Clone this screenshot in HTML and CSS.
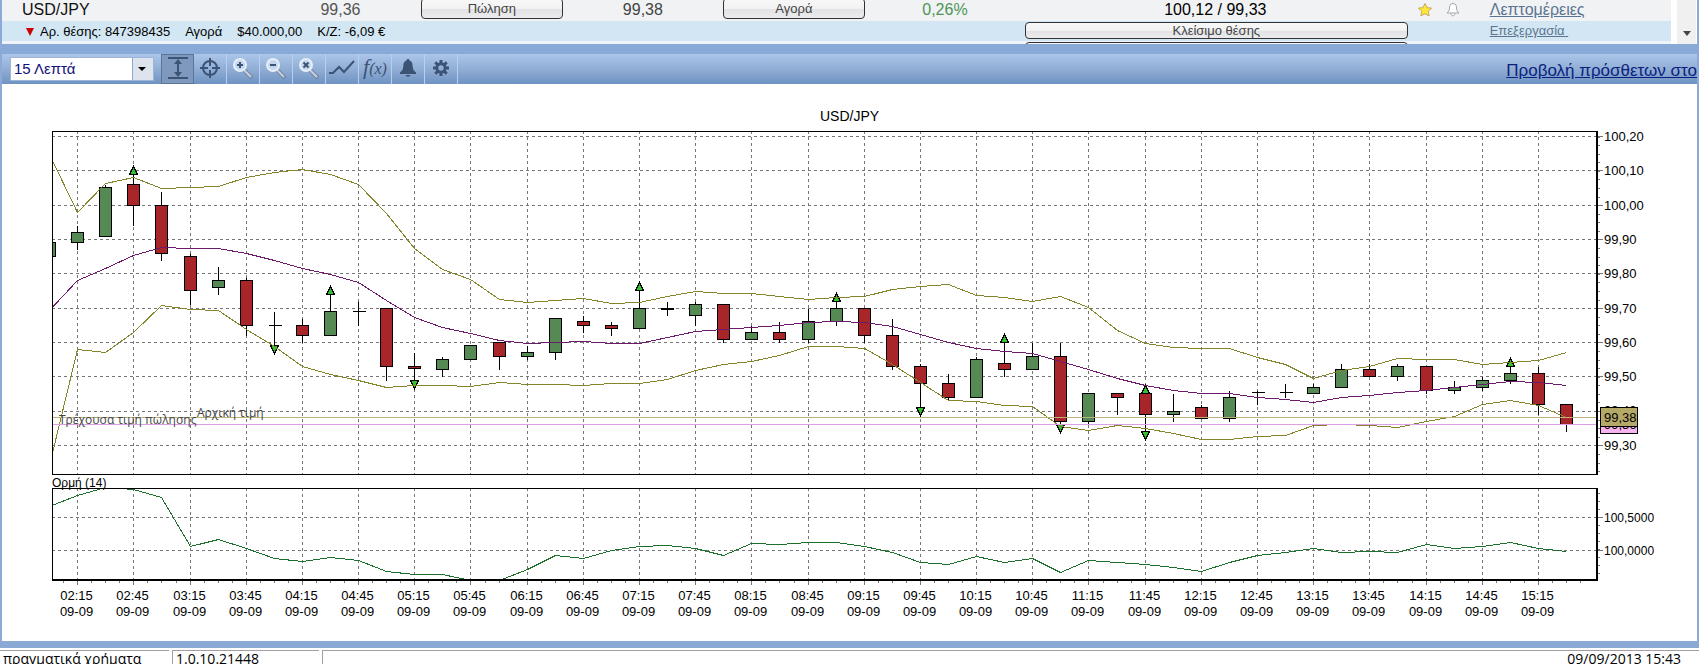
FILE: index.html
```html
<!DOCTYPE html>
<html lang="el">
<head>
    <meta charset="UTF-8">
    <meta name="viewport" content="width=device-width, initial-scale=1.0">
    <link rel="icon" href="data:,">
    <title>USD/JPY</title>
    <link rel="stylesheet" href="styles.css">
</head>
<body>
<div class="window">
    <!-- Instruments and open positions -->
    <div class="quotes">
        <table class="quotes-table">
            <colgroup>
                <col class="col-name">
                <col class="col-price">
                <col class="col-button">
                <col class="col-price2">
                <col class="col-button">
                <col class="col-price2">
                <col class="col-range">
                <col class="col-icons">
                <col class="col-link">
            </colgroup>
            <tr class="row-pair">
                <td class="name">USD/JPY</td>
                <td class="sell">99,36</td>
                <td><button type="button" class="trade-btn">Πώληση</button></td>
                <td class="center">99,38</td>
                <td><button type="button" class="trade-btn">Αγορά</button></td>
                <td class="center change">0,26%</td>
                <td class="center range">100,12 / 99,33</td>
                <td class="icons">
                    <svg width="16" height="16" viewBox="0 0 16 16"><path d="M8 1.5l2 4.1 4.6.6-3.4 3.1.9 4.6L8 11.8l-4.1 2.1.9-4.6L1.4 6.2 6 5.6z" fill="#ffe63c" stroke="#c9a758" stroke-width="1"/></svg>
                    <svg width="16" height="16" viewBox="0 0 16 16"><path d="M8 1.5c-3 0-3.500 2.500-3.500 4.500 0 2.500-1 3.500-2.500 5h12c-1.500-1.500-2.500-2.500-2.500-5 0-2-.5-4.500-3.500-4.500zM6 11.500c0 3 4 3 4 0" fill="#fff" stroke="#a5a5a8" stroke-width="1"/></svg>
                </td>
                <td class="links"><a href="#" class="details">Λεπτομέρειες</a></td>
            </tr>
            <tr class="row-position">
                <td colspan="6">
                    <div class="position">
                        <span class="down"></span>
                        <span class="pos-number">Αρ. θέσης: 847398435</span>
                        <span>Αγορά</span>
                        <span>$40.000,00</span>
                        <span>Κ/Ζ: -6,09 €</span>
                    </div>
                </td>
                <td class="close-cell"><button type="button" class="trade-btn close-btn">Κλείσιμο θέσης</button></td>
                <td></td>
                <td class="links"><a href="#" class="edit">Επεξεργασία&nbsp;</a></td>
            </tr>
            <tr class="row-next">
                <td colspan="6"></td>
                <td class="close-cell"><button type="button" class="trade-btn close-btn" aria-label="Κλείσιμο"></button></td>
                <td></td>
                <td></td>
            </tr>
        </table>
        <div class="scrollbar"><span class="scroll-arrow"></span></div>
    </div>

    <!-- Chart toolbar -->
    <div class="toolbar">
        <div class="period">
            <select aria-label="Περίοδος">
                <option>15 Λεπτά</option>
            </select>
        </div>
        <div class="tools">
            <button type="button" class="tool pressed" aria-label="Κλίμακα">
                <svg width="22" height="24" viewBox="0 0 22 24"><path d="M1 2h20M1 22h20M11 6v12" stroke="#3c5374" stroke-width="2"/><path d="M11 3l4 5H7zM11 21l4-5H7z" fill="#3c5374"/></svg>
            </button>
            <button type="button" class="tool" aria-label="Σταυρόνημα">
                <svg width="22" height="22" viewBox="0 0 22 22" fill="none" stroke="#3c5374"><circle cx="11" cy="11" r="7" stroke-width="2"/><path d="M11 1v8M11 13v8M1 11h8M13 11h8" stroke-width="2"/></svg>
            </button>
            <button type="button" class="tool" aria-label="Μεγέθυνση">
                <svg width="24" height="24" viewBox="0 0 24 24"><path d="M13 14l8 8" stroke="#7588a6" stroke-width="4"/><path d="M13 14l7 7" stroke="#c5d0e0" stroke-width="2"/><circle cx="9" cy="9" r="6" fill="#c3d8ee" stroke="#e6eff8" stroke-width="2"/><path d="M6 9h6M9 6v6" stroke="#3c5374" stroke-width="2"/></svg>
            </button>
            <button type="button" class="tool" aria-label="Σμίκρυνση">
                <svg width="24" height="24" viewBox="0 0 24 24"><path d="M13 14l8 8" stroke="#7588a6" stroke-width="4"/><path d="M13 14l7 7" stroke="#c5d0e0" stroke-width="2"/><circle cx="9" cy="9" r="6" fill="#c3d8ee" stroke="#e6eff8" stroke-width="2"/><path d="M6 9h6" stroke="#3c5374" stroke-width="2"/></svg>
            </button>
            <button type="button" class="tool" aria-label="Επαναφορά">
                <svg width="24" height="24" viewBox="0 0 24 24"><path d="M13 14l8 8" stroke="#7588a6" stroke-width="4"/><path d="M13 14l7 7" stroke="#c5d0e0" stroke-width="2"/><circle cx="9" cy="9" r="6" fill="#c3d8ee" stroke="#e6eff8" stroke-width="2"/><path d="M6.500 6.500l5 5M11.500 6.500l-5 5" stroke="#3c5374" stroke-width="2"/></svg>
            </button>
            <button type="button" class="tool" aria-label="Γραμμή">
                <svg width="28" height="22" viewBox="0 0 28 22"><path d="M1 16h4l6-6 5 5 10-11" fill="none" stroke="#3c5374" stroke-width="2"/></svg>
            </button>
            <button type="button" class="tool fx" aria-label="Δείκτες"><span class="fx-f">f</span><span class="fx-x">(x)</span></button>
            <button type="button" class="tool" aria-label="Ειδοποίηση">
                <svg width="18" height="20" viewBox="0 0 18 20" fill="#3c5374"><path d="M9 1c-1 0-1.500.6-1.500 1.500C4.500 3.500 4.500 6 4.200 9c-.2 2.500-1.200 4-3.200 5.500V16h16v-1.500c-2-1.500-3-3-3.200-5.500-.3-3-.3-5.500-3.300-6.500C10.500 1.600 10 1 9 1z"/><path d="M6.500 17h5c-.6 2.300-4.400 2.300-5 0z"/></svg>
            </button>
            <button type="button" class="tool" aria-label="Ρυθμίσεις">
                <svg width="18" height="18" viewBox="0 0 18 18" fill="none" stroke="#3c5374"><circle cx="9" cy="9" r="4.200" stroke-width="3"/><path d="M9 1v3M9 14v3M1 9h3M14 9h3M3.300 3.300l2.200 2.200M12.500 12.500l2.200 2.200M14.700 3.300l-2.200 2.200M5.500 12.500l-2.200 2.200" stroke-width="3"/></svg>
            </button>
        </div>
        <a href="#" class="more">Προβολή πρόσθετων στο</a>
    </div>

    <div class="chart" id="chart"></div>
</div>

<div class="statusbar">
    <div class="cell account">πραγματικά χρήματα</div>
    <div class="cell version">1.0.10.21448</div>
    <div class="cell clock">09/09/2013 15:43</div>
</div>
<script src="chart.js"></script>
</body>
</html>
```
FILE: styles.css
```css
body {
    margin: 0;
    background-color: #fff;
    font-family: "Liberation Sans", Arial, sans-serif;
    font-size: 13px;
    color: #000;
    overflow: hidden;
}

.window {
    border-left: 2px solid #8da9d9;
    border-right: 2px solid #8da9d9;
    border-bottom: 7px solid #8aa9d5;
}

/* Quotes list, scrolled a little so its last row is cut */
.quotes {
    display: flex;
    height: 44px;
    overflow: hidden;
    align-items: flex-end;
    border-bottom: 10px solid #89a9d6;
}
.quotes-table {
    flex: 1;
    table-layout: fixed;
    border-collapse: collapse;
    align-self: flex-start;
    margin-top: -2px;
}
.quotes-table td {
    padding: 0;
    vertical-align: top;
    white-space: nowrap;
}
.col-name { width: 18.9%; }
.col-price { width: 6%; }
.col-button { width: 8.9%; }
.col-price2 { width: 9.2%; }
.col-range { width: 23.2%; }
.col-icons { width: 4.6%; }
.col-link { width: 11.1%; }

.row-pair {
    height: 23px;
    background-color: #f1f2f4;
    font-size: 16px;
    line-height: 23px;
    color: #444;
}
.row-pair .name {
    padding-left: 20px;
    color: #111;
}
.row-pair .sell {
    padding-left: 3px;
    color: #555;
}
.row-pair .center { text-align: center; }
.row-pair .change { color: #4d9554; }
.row-pair .range { color: #000; }
.row-pair .icons {
    padding-left: 8px;
    line-height: 0;
}
.icons svg {
    margin: 4px 8px 0 0;
}

.row-position {
    height: 20px;
    background-color: #d2e7f3;
}
.row-next {
    height: 20px;
    background-color: #f0f4f8;
}
.position {
    display: flex;
    align-items: center;
    gap: 15px;
    padding: 1px 0 0 24px;
    line-height: 19px;
}
.down {
    border-left: 4px solid transparent;
    border-right: 4px solid transparent;
    border-top: 8px solid #c00;
}
.pos-number { margin-left: -9px; }

.trade-btn {
    display: block;
    box-sizing: border-box;
    width: 142px;
    max-width: 100%;
    height: 21px;
    margin: 0 auto;
    padding: 0;
    border: 1px solid #333;
    border-radius: 4px;
    background: linear-gradient(#f8f8f9, #f2f2f3 50%, #e2e2e4 52%, #ececee);
    font-family: inherit;
    font-size: 13px;
    line-height: 19px;
    color: #444;
    cursor: pointer;
}
.close-btn {
    width: 100%;
    height: 17px;
    line-height: 14px;
}
.quotes-table .close-cell { padding: 1px 1px 0 3px; }
.quotes-table .links { padding-left: 4px; }

.details,
.edit { color: #5b7590; }
.edit { line-height: 20px; }

.scrollbar {
    width: 19px;
    height: 44px;
    margin-left: 6px;
    border-right: 1px solid #fff;
    background-color: #f0f0f0;
    display: flex;
    align-items: flex-end;
    justify-content: center;
}
.scroll-arrow {
    margin-bottom: 8px;
    border-left: 4px solid transparent;
    border-right: 4px solid transparent;
    border-top: 5px solid #444;
}

/* Toolbar */
.toolbar {
    display: flex;
    align-items: center;
    height: 30px;
    background: linear-gradient(#abc6e9, #8eabd3 55%, #6e93c2);
}
.period {
    position: relative;
    flex: none;
    width: 144px;
    height: 24px;
    margin-left: 8px;
}
.period select {
    appearance: none;
    width: 100%;
    height: 100%;
    padding: 0 24px 2px 3px;
    border: 1px solid #9db6d8;
    border-radius: 0;
    background: linear-gradient(to right, #fff 121px, #8da9d0 121px, #8da9d0 122px, #dde4ee 122px);
    font-family: inherit;
    font-size: 15px;
    color: #10107a;
}
.period::after {
    content: "";
    position: absolute;
    right: 8px;
    top: 10px;
    border-left: 4px solid transparent;
    border-right: 4px solid transparent;
    border-top: 4px solid #000;
    pointer-events: none;
}
.tools {
    display: flex;
    align-self: stretch;
    margin-left: 7px;
}
.tool {
    display: flex;
    align-items: center;
    justify-content: center;
    box-sizing: border-box;
    width: 33px;
    padding: 0 0 2px;
    border: 0;
    border-right: 1px solid #b7d0ef;
    background: none;
    cursor: pointer;
}
.tool.pressed {
    border: 1px solid #5d7499;
    background-color: #7f98bd;
}
.fx {
    align-items: baseline;
    font-family: "Liberation Serif", serif;
    font-style: italic;
    color: #3c5374;
}
.fx-f {
    font-size: 22px;
    line-height: 26px;
}
.fx-x { font-size: 16px; }
.more {
    flex: none;
    margin-left: auto;
    white-space: nowrap;
    font-size: 17px;
    line-height: 20px;
    padding-top: 3px;
    color: #0a1f80;
}

/* Chart */
.chart svg {
    display: block;
    shape-rendering: crispEdges;
}
.chart text { font-size: 13px; }
.chart .title { font-size: 14px; }
.chart .study { font-size: 12px; }
.chart .note {
    font-family: "Open Sans", sans-serif;
    font-size: 12px;
    fill: #444;
}
.frame {
    fill: none;
    stroke: #000;
}
.axis {
    stroke: #000;
    stroke-width: 2;
}
.grid {
    stroke: #777;
    stroke-dasharray: 3 3;
}
.tick { stroke: #777; }
.wick { stroke: #000; }
.up, .down-body { stroke: #000; }
.up { fill: #568a54; }
.down-body { fill: #a8262a; }
.arrow {
    fill: #2fc42f;
    stroke: #000;
}
.band, .middle, .momentum { fill: none; }
.band { stroke: #84842a; }
.middle { stroke: #6c1a6c; }
.momentum { stroke: #1d6f2b; }
.line-open { stroke: #bdb07a; }
.line-sell { stroke: #dda0e6; }
.tag-open { fill: #b5a968; stroke: #000; }
.tag-sell { fill: #f8b4f0; stroke: #000; }

/* Status bar */
.statusbar {
    display: flex;
    gap: 3px;
    margin-top: 2px;
    font-family: "Open Sans", sans-serif;
    font-size: 14px;
    line-height: 16px;
}
.cell {
    box-sizing: border-box;
    border-top: 1px solid #a59fa5;
    padding-left: 3px;
    white-space: nowrap;
}
.account { width: 169px; }
.version {
    width: 147px;
    border-left: 1px solid #a59fa5;
}
.clock {
    flex: 1;
    border-left: 1px solid #a59fa5;
    padding-right: 18px;
    text-align: right;
}
```
FILE: chart.js
```js
// open, close, high, low, signal (u - arrow above, d - arrow below, b - both)
const candles = [
    [99.85, 99.89, 99.89, 99.85], [99.89, 99.92, 99.94, 99.87], [99.91, 100.05, 100.06, 99.91],
    [100.06, 100.00, 100.09, 99.94, 'u'], [100.00, 99.86, 100.04, 99.84], [99.85, 99.75, 99.86, 99.71],
    [99.76, 99.78, 99.82, 99.74], [99.78, 99.65, 99.79, 99.62], [99.65, 99.65, 99.69, 99.59, 'd'],
    [99.65, 99.62, 99.67, 99.60], [99.62, 99.69, 99.74, 99.62, 'u'], [99.69, 99.69, 99.72, 99.65],
    [99.70, 99.53, 99.70, 99.49], [99.53, 99.525, 99.57, 99.49, 'd'], [99.52, 99.55, 99.56, 99.50],
    [99.55, 99.59, 99.59, 99.55], [99.60, 99.56, 99.60, 99.52], [99.56, 99.57, 99.59, 99.55],
    [99.57, 99.67, 99.67, 99.55], [99.66, 99.65, 99.68, 99.63], [99.65, 99.64, 99.66, 99.62],
    [99.64, 99.70, 99.75, 99.64, 'u'], [99.70, 99.695, 99.72, 99.68], [99.68, 99.71, 99.72, 99.65],
    [99.71, 99.61, 99.71, 99.60], [99.61, 99.63, 99.65, 99.61], [99.63, 99.61, 99.66, 99.60],
    [99.61, 99.66, 99.70, 99.60], [99.66, 99.70, 99.72, 99.65, 'u'], [99.70, 99.62, 99.70, 99.60],
    [99.62, 99.53, 99.67, 99.52], [99.53, 99.48, 99.54, 99.41, 'd'], [99.48, 99.44, 99.51, 99.43],
    [99.44, 99.55, 99.56, 99.44], [99.54, 99.52, 99.60, 99.50, 'u'], [99.52, 99.56, 99.60, 99.52],
    [99.56, 99.37, 99.60, 99.36, 'd'], [99.37, 99.45, 99.45, 99.36], [99.45, 99.44, 99.45, 99.39],
    [99.45, 99.39, 99.45, 99.34, 'b'], [99.39, 99.40, 99.45, 99.37], [99.41, 99.38, 99.42, 99.38],
    [99.38, 99.44, 99.46, 99.37], [99.455, 99.455, 99.46, 99.42], [99.455, 99.455, 99.48, 99.44],
    [99.45, 99.47, 99.48, 99.45], [99.47, 99.52, 99.54, 99.47], [99.52, 99.50, 99.54, 99.50],
    [99.50, 99.53, 99.54, 99.49], [99.53, 99.46, 99.53, 99.45], [99.46, 99.47, 99.49, 99.45],
    [99.47, 99.49, 99.50, 99.46], [99.49, 99.51, 99.53, 99.48, 'u'], [99.51, 99.42, 99.53, 99.39],
    [99.42, 99.36, 99.42, 99.34]
];

// Study samples, one per candle, in thirds of a pixel downwards
const upper = [103,276,190,172,206,202,199,172,157,148,163,193,281,384,449,477,537,547,541,535,550,547,529,514,519,520,528,538,533,528,508,499,492,525,533,544,529,562,630,669,681,685,685,711,733,776,750,739,715,718,718,733,727,721,697];
const middle = [572,482,445,405,382,385,385,400,422,445,463,487,541,592,623,640,661,670,667,664,670,670,652,634,628,622,616,608,604,608,619,643,667,685,693,700,724,748,775,796,811,820,821,832,838,847,832,826,818,811,802,794,784,787,796];
const lower = [1036,688,697,636,557,567,572,628,680,739,764,781,802,796,796,799,787,793,793,796,790,790,777,750,733,723,706,680,680,686,733,788,841,845,856,860,920,931,916,925,940,958,958,949,946,915,913,915,922,904,890,853,841,856,893];
const momentum = [139,106,83,89,112,259,238,265,295,304,292,301,333,343,343,361,361,328,286,295,271,259,256,265,287,250,253,247,247,259,277,307,313,289,307,295,337,301,307,313,323,334,308,287,277,265,277,273,277,253,265,259,247,265,273];

const HEIGHT = 557;
const LEFT = 50;
const TOP = 47, BOTTOM = 390;
const MTOP = 404, MBOTTOM = 496;

function priceY(p) {
    return Math.round(52 + (100.2 - p) * 343.3) + 0.5;
}

function line(x1, y1, x2, y2, cls) {
    return `<line x1="${x1}" y1="${y1}" x2="${x2}" y2="${y2}" class="${cls}"/>`;
}

function text(x, y, str, cls = '', anchor = 'start') {
    return `<text x="${x}" y="${y}" class="${cls}" text-anchor="${anchor}">${str}</text>`;
}

function draw() {
    const box = document.getElementById('chart');
    const width = box.clientWidth;
    const right = width - 100;
    const step = (right - LEFT) / 55;
    const x = i => Math.floor(LEFT + step * (i + 0.915)) + 0.5;
    const path = (data, offset, cls) => {
        const pts = data.map((v, i) => `${x(i - 1)},${Math.floor(v / 3 + offset) + 0.5}`);
        return `<polyline points="${pts.join(' ')}" class="${cls}"/>`;
    };
    let out = '';

    // grid and price scale
    for (let n = 0; n < 10; n++) {
        const p = 100.2 - n * 0.1;
        const y = priceY(p);
        out += line(LEFT, y, right, y, 'grid');
        out += line(right, y, right + 6, y, 'tick');
        // the 99,40 label gives way to the price tags
        if (n !== 8) {
            out += text(right + 7, y + 4, p.toFixed(2).replace('.', ','));
        }
    }
    for (let y = 52.5; y < BOTTOM; y += 8.58) {
        out += line(right, Math.round(y) + 0.5, right + 3, Math.round(y) + 0.5, 'tick');
    }
    [[433.5, '100,5000'], [466.5, '100,0000']].forEach(([y, label]) => {
        out += line(LEFT, y, right, y, 'grid');
        out += line(right, y, right + 6, y, 'tick');
        out += text(right + 7, y + 4, label, 'study');
    });
    for (let y = 409; y < MBOTTOM; y += 8) {
        out += line(right, y + 0.5, right + 3, y + 0.5, 'tick');
    }

    // time scale
    for (let i = 0; i <= 52; i += 2) {
        const minutes = 135 + i * 15;
        const time = String(Math.floor(minutes / 60)).padStart(2, '0') + ':' + minutes % 60;
        out += line(x(i), TOP, x(i), BOTTOM, 'grid');
        out += line(x(i), MTOP, x(i), MBOTTOM, 'grid');
        out += line(x(i), MBOTTOM, x(i), MBOTTOM + 5, 'tick');
        out += text(x(i) - 1, 516, time, '', 'middle');
        out += text(x(i) - 1, 532, '09-09', '', 'middle');
    }
    for (let i = -0.5; i < 54; i += 0.5) {
        out += line(x(i), MBOTTOM, x(i), MBOTTOM + 3, 'tick');
    }

    // candles
    let bodies = '';
    candles.forEach(([open, close, high, low, signal], n) => {
        const cx = x(n - 1);
        const top = priceY(Math.max(open, close));
        const bottom = priceY(Math.min(open, close));
        bodies += line(cx, priceY(high), cx, priceY(low), 'wick');
        if (open === close) {
            bodies += line(cx - 6, top, cx + 7, top, 'wick');
        } else {
            bodies += `<rect x="${cx - 6}" y="${top}" width="12" height="${bottom - top}" class="${close > open ? 'up' : 'down-body'}"/>`;
        }
        if (signal === 'u' || signal === 'b') {
            const y = priceY(high);
            bodies += `<path d="M${cx} ${y - 8}l4 8h-8z" class="arrow"/>`;
        }
        if (signal === 'd' || signal === 'b') {
            const y = priceY(low);
            bodies += `<path d="M${cx} ${y + 8}l4 -8h-8z" class="arrow"/>`;
        }
    });
    out += `<g clip-path="url(#pricePlot)">${bodies}`;
    out += path(upper, 36, 'band') + path(lower, 36, 'band') + path(middle, 36, 'middle');
    out += line(LEFT, 333.5, right, 333.5, 'line-open') + line(LEFT, 340.5, right, 340.5, 'line-sell');
    out += '</g>';
    out += `<g clip-path="url(#momentumPlot)">${path(momentum, 376, 'momentum')}</g>`;
    out += text(57, 340, 'Τρέχουσα τιμή πώλησης', 'note') + text(195, 333, 'Αρχική τιμή', 'note');

    // frames
    out += `<rect x="50.5" y="${TOP + 0.5}" width="${right - LEFT}" height="${BOTTOM - TOP}" class="frame"/>`;
    out += `<rect x="50.5" y="${MTOP + 0.5}" width="${right - LEFT}" height="${MBOTTOM - MTOP}" class="frame"/>`;
    out += line(right, TOP, right, BOTTOM + 1, 'axis') + line(right, MTOP, right, MBOTTOM + 1, 'axis');
    out += line(LEFT, MBOTTOM, right + 1, MBOTTOM, 'axis');

    // current price tags, the opening price lies over the sell price
    out += text(right + 7, 331, '99,40');
    out += `<rect x="${right + 3.5}" y="330.5" width="37" height="19" class="tag-sell"/>`;
    out += text(right + 7, 345, '99,36');
    out += `<rect x="${right + 3.5}" y="323.5" width="37" height="19" class="tag-open"/>`;
    out += text(right + 7, 338, '99,38');

    out += text((LEFT + right) / 2 + 25, 37, 'USD/JPY', 'title', 'middle');
    out += text(50, 403, 'Ορμή (14)', 'study');

    box.innerHTML = `<svg width="${width}" height="${HEIGHT}">
        <defs>
            <clipPath id="pricePlot"><rect x="${LEFT}" y="${TOP}" width="${right - LEFT}" height="${BOTTOM - TOP}"/></clipPath>
            <clipPath id="momentumPlot"><rect x="${LEFT}" y="${MTOP}" width="${right - LEFT}" height="${MBOTTOM - MTOP}"/></clipPath>
        </defs>${out}</svg>`;
}

draw();
window.addEventListener('resize', draw);
```
